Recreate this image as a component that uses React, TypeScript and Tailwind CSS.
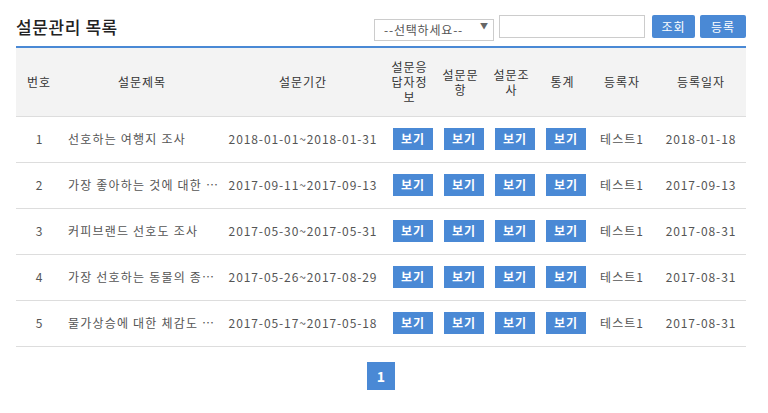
import React from 'react';

const rows = [
  { no: 1, title: '선호하는 여행지 조사', period: '2018-01-01~2018-01-31', writer: '테스트1', date: '2018-01-18' },
  { no: 2, title: '가장 좋아하는 것에 대한 …', period: '2017-09-11~2017-09-13', writer: '테스트1', date: '2017-09-13' },
  { no: 3, title: '커피브랜드 선호도 조사', period: '2017-05-30~2017-05-31', writer: '테스트1', date: '2017-08-31' },
  { no: 4, title: '가장 선호하는 동물의 종…', period: '2017-05-26~2017-08-29', writer: '테스트1', date: '2017-08-31' },
  { no: 5, title: '물가상승에 대한 체감도 …', period: '2017-05-17~2017-05-18', writer: '테스트1', date: '2017-08-31' },
];

const font = { fontFamily: '"Noto Sans CJK KR", "Noto Sans", sans-serif' };

const ViewButton = () => (
  <button type="button" className="w-10 h-[22px] bg-[#4a89d5] text-white text-xs font-bold leading-none tracking-[1px]">
    보기
  </button>
);

export default function App() {
  return (
    <div className="bg-white w-[768px] h-[413px] pl-4 pr-[22px] pt-[15px]" style={font}>
      {/* Top bar */}
      <div className="flex items-center justify-between h-[23px] mb-[8px]">
        <h1 className="text-[17px] font-medium text-[#222] leading-none tracking-[0.6px]">설문관리 목록</h1>
        <div className="flex items-center">
          <div className="relative w-[120px] h-[22px]">
            <select className="appearance-none w-full h-full border border-[#ccc] bg-white text-xs text-[#555] pl-[9px] tracking-[0.8px] outline-none">
              <option>--선택하세요--</option>
            </select>
            <span className="absolute right-[6px] top-[6px] text-[8px] leading-none text-[#666] pointer-events-none">▼</span>
          </div>
          <input className="ml-[5px] w-[146px] h-[23px] border border-[#ccc] outline-none" />
          <button type="button" className="ml-[7px] w-[43px] h-[23px] rounded-[2px] bg-[#4a89d5] text-white text-xs tracking-[1px]">조회</button>
          <button type="button" className="ml-[5px] w-[46px] h-[23px] rounded-[2px] bg-[#4a89d5] text-white text-xs tracking-[1px]">등록</button>
        </div>
      </div>

      {/* Table */}
      <table className="w-full table-fixed border-collapse border-t-2 border-[#4a89d5] text-xs">
        <colgroup>
          <col className="w-[46px]" />
          <col className="w-[160px]" />
          <col className="w-[162px]" />
          <col className="w-[51px]" />
          <col className="w-[51px]" />
          <col className="w-[51px]" />
          <col className="w-[51px]" />
          <col className="w-[68px]" />
          <col className="w-[90px]" />
        </colgroup>
        <thead>
          <tr className="bg-[#f3f3f3] border-b border-[#ddd] text-[#333] tracking-[1px]">
            <th className="h-[69px] font-normal leading-[15px]">번호</th>
            <th className="font-normal leading-[15px]">설문제목</th>
            <th className="font-normal leading-[15px]">설문기간</th>
            <th className="font-normal leading-[15px] px-[4px]">설문응답자정보</th>
            <th className="font-normal leading-[15px] px-[4px]">설문문항</th>
            <th className="font-normal leading-[15px] px-[4px]">설문조사</th>
            <th className="font-normal leading-[15px] px-[4px]">통계</th>
            <th className="font-normal leading-[15px]">등록자</th>
            <th className="font-normal leading-[15px]">등록일자</th>
          </tr>
        </thead>
        <tbody className="text-[#555]">
          {rows.map(r => (
            <tr key={r.no} className="border-b border-[#ddd]">
              <td className="h-[46px] text-center">{r.no}</td>
              <td className="px-[6px] whitespace-nowrap tracking-[1.2px]">{r.title}</td>
              <td className="text-center tracking-[0.9px]">{r.period}</td>
              <td className="pl-[9px]"><ViewButton /></td>
              <td className="pl-[9px]"><ViewButton /></td>
              <td className="pl-[9px]"><ViewButton /></td>
              <td className="pl-[9px]"><ViewButton /></td>
              <td className="text-center tracking-[1px]">{r.writer}</td>
              <td className="text-center tracking-[0.9px]">{r.date}</td>
            </tr>
          ))}
        </tbody>
      </table>

      {/* Pagination */}
      <div className="flex justify-center mt-[15px]">
        <span className="w-7 h-7 flex items-center justify-center bg-[#4a89d5] text-white text-sm font-bold">1</span>
      </div>
    </div>
  );
}
